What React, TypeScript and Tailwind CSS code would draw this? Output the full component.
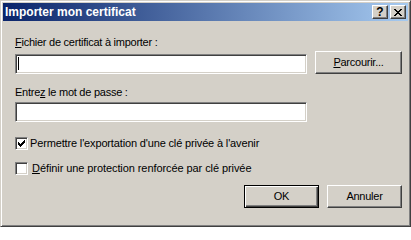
import React from "react";

const raised =
  "border border-t-white border-l-white border-b-[#404040] border-r-[#404040] shadow-[inset_-1px_-1px_0_#808080]";
const sunken =
  "border border-t-[#808080] border-l-[#808080] border-b-white border-r-white shadow-[inset_1px_1px_0_#404040,inset_-1px_-1px_0_#d4d0c8]";

function Check() {
  const cols = [2, 3, 4, 3, 2, 1, 0];
  return (
    <svg width="7" height="7" viewBox="0 0 7 7" shapeRendering="crispEdges">
      {cols.map((r, i) => (
        <rect key={i} x={i} y={r} width="1" height="3" fill="#000" />
      ))}
    </svg>
  );
}

function Checkbox({ checked }: { checked?: boolean }) {
  return (
    <div className={`w-[13px] h-[13px] bg-white flex items-center justify-center shrink-0 ${sunken}`}>
      {checked ? <Check /> : null}
    </div>
  );
}

function CloseGlyph() {
  const px: [number, number][] = [];
  for (let i = 0; i < 7; i++) {
    px.push([i, i], [i + 1, i], [6 - i, i], [7 - i, i]);
  }
  return (
    <svg width="8" height="7" viewBox="0 0 8 7" shapeRendering="crispEdges">
      {px.map(([x, y], k) => (
        <rect key={k} x={x} y={y} width="1" height="1" fill="#000" />
      ))}
    </svg>
  );
}

export default function App() {
  return (
    <div className="w-[411px] h-[227px] bg-[#d4d0c8] font-['Liberation_Sans',Arial,sans-serif] text-[11px] text-black">
      <div className="w-full h-full border border-t-[#d4d0c8] border-l-[#d4d0c8] border-b-[#404040] border-r-[#404040] shadow-[inset_1px_1px_0_#ffffff,inset_-1px_-1px_0_#808080] p-[2px] flex flex-col">
        {/* Title bar */}
        <div className="h-[18px] shrink-0 bg-[linear-gradient(to_right,#0a246a,#a6caf0)] flex items-center justify-between pl-[2px] pr-[2px]">
          <span className="text-white font-bold text-[12px] leading-[18px]">Importer mon certificat</span>
          <div className="flex gap-[2px]">
            <div className={`w-[16px] h-[14px] bg-[#d4d0c8] flex items-center justify-center ${raised}`}>
              <span className="font-bold text-[12px] leading-[11px] pt-[1px]">?</span>
            </div>
            <div className={`w-[16px] h-[14px] bg-[#d4d0c8] flex items-center justify-center ${raised}`}>
              <CloseGlyph />
            </div>
          </div>
        </div>

        {/* Body */}
        <div className="flex flex-col pl-[12px] pr-[6px] pt-[15px] tracking-[-0.25px]">
          <div className="h-[13px] leading-[13px]">
            <u>F</u>ichier de certificat à importer :
          </div>
          <div className="mt-[2px] flex items-end justify-between">
            <div className={`w-[292px] h-[20px] bg-white relative ${sunken}`}>
              <div className="absolute left-[2px] top-[2px] w-[1px] h-[13px] bg-black" />
            </div>
            <button className={`w-[87px] h-[23px] bg-[#d4d0c8] flex items-center justify-center leading-[13px] ${raised}`}>
              <span>
                <u>P</u>arcourir...
              </span>
            </button>
          </div>
          <div className="mt-[12px] h-[13px] leading-[13px]">
            Entre<u>z</u> le mot de passe :
          </div>
          <div className={`mt-[3px] w-[292px] h-[20px] bg-white ${sunken}`} />

          <div className="mt-[15px] h-[13px] flex items-center">
            <Checkbox checked />
            <span className="ml-[2px] leading-[13px] tracking-[-0.15px]">Permettre l'exportation d'une clé privée à l'avenir</span>
          </div>
          <div className="mt-[12px] h-[13px] flex items-center">
            <Checkbox />
            <span className="ml-[4px] leading-[13px] tracking-[-0.08px]">
              <u>D</u>éfinir une protection renforcée par clé privée
            </span>
          </div>

          <div className="mt-[10px] flex justify-end gap-[8px]">
            <button className="w-[75px] h-[23px] border border-black bg-[#d4d0c8] shadow-[inset_1px_1px_0_#ffffff,inset_-1px_-1px_0_#404040,inset_-2px_-2px_0_#808080] flex items-center justify-center leading-[13px]">
              OK
            </button>
            <button className={`w-[75px] h-[23px] bg-[#d4d0c8] flex items-center justify-center leading-[13px] ${raised}`}>
              Annuler
            </button>
          </div>
        </div>
      </div>
    </div>
  );
}
